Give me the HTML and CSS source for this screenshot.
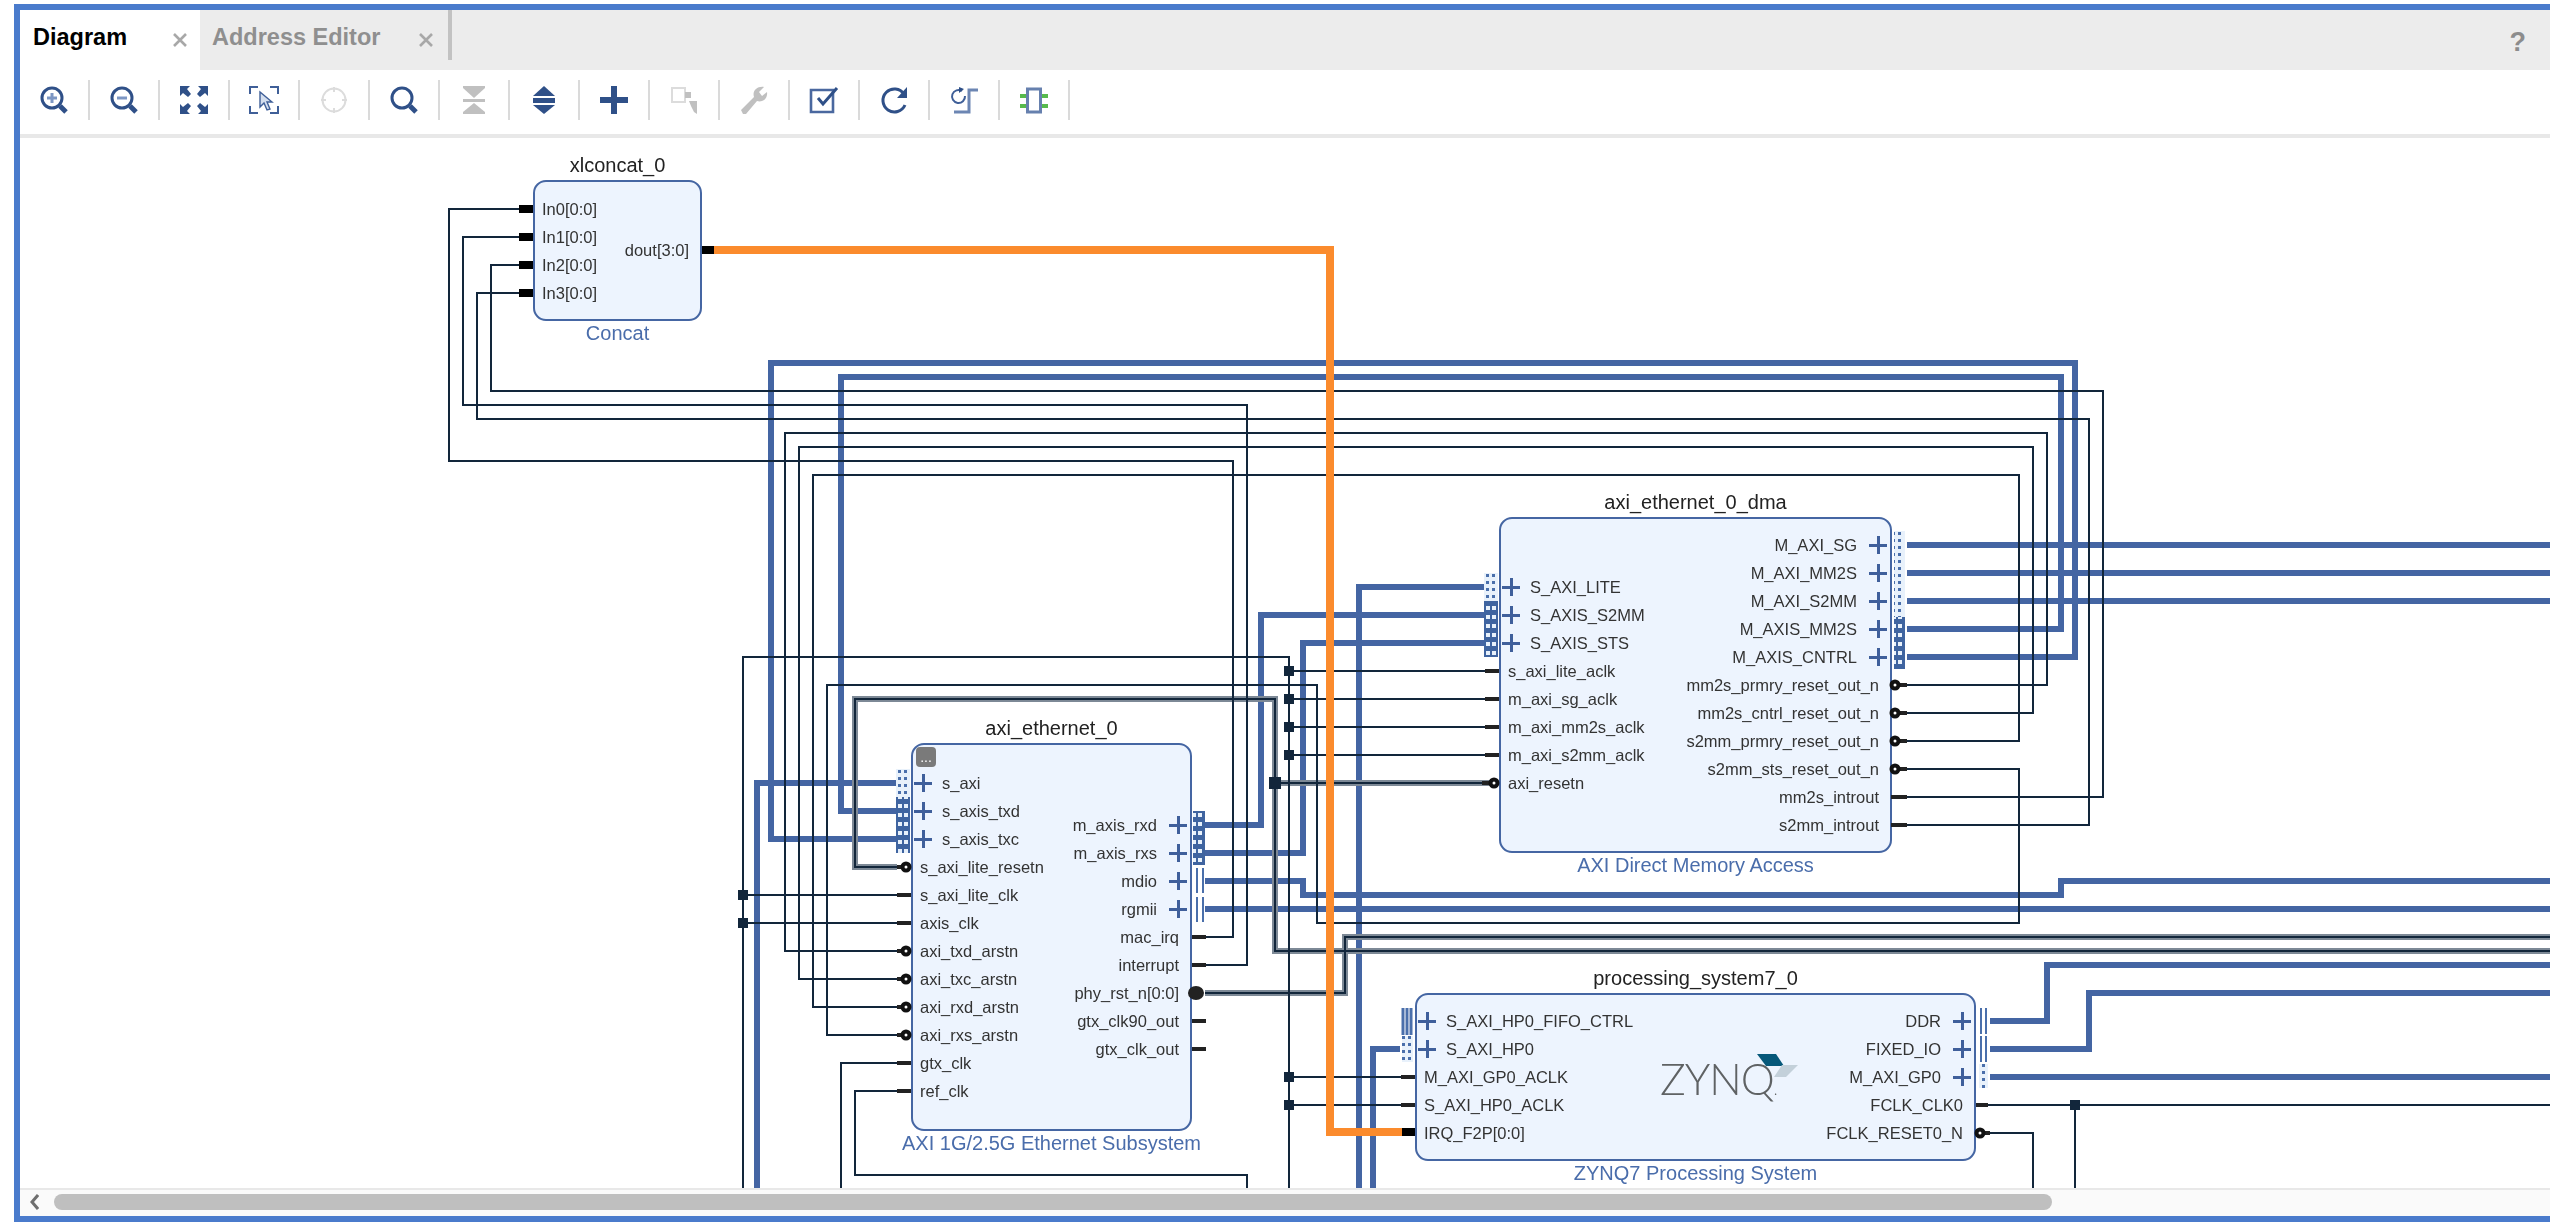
FILE: index.html
```html
<!DOCTYPE html>
<html lang="en">
<head>
<meta charset="utf-8">
<title>Diagram</title>
<link rel="stylesheet" href="styles.css">
</head>
<body>
<div class="frame">
  <div class="tabbar">
    <div class="tab tab-active"><span class="tab-label">Diagram</span>
      <svg class="tab-close" viewBox="0 0 14 14"><path d="M1 1L13 13M13 1L1 13"/></svg></div>
    <div class="tab tab-idle"><span class="tab-label">Address Editor</span>
      <svg class="tab-close" viewBox="0 0 14 14"><path d="M1 1L13 13M13 1L1 13"/></svg></div>
    <div class="help">?</div>
  </div>

  <div class="toolbar">
    <div class="tool"><svg viewBox="0 0 28 28"><circle class="s-dark" cx="12" cy="12" r="10"/><path class="s-light" d="M12 7V17M7 12H17"/><path class="s-handle" d="M20 20L26 26"/></svg></div>
    <div class="tool"><svg viewBox="0 0 28 28"><circle class="s-dark" cx="12" cy="12" r="10"/><path class="s-light" d="M7 12H17"/><path class="s-handle" d="M20 20L26 26"/></svg></div>
    <div class="tool"><svg viewBox="0 0 28 28"><g class="f-dark"><path d="M0 0H10L7 3L11 8L8 11L3 7L0 10Z"/><path d="M28 0V10L25 7L20 11L17 8L21 3L18 0Z"/><path d="M0 28V18L3 21L8 17L11 20L7 25L10 28Z"/><path d="M28 28H18L21 25L17 20L20 17L25 21L28 18Z"/></g></svg></div>
    <div class="tool"><svg viewBox="0 0 28 28"><path class="s-thin" d="M0 8V1H8M20 1H28V8M0 20V27H8M20 27H28V20"/><path class="cursor" d="M10 6V21L14 17L17 24L20 23L17 16L22 16Z"/></svg></div>
    <div class="tool"><svg viewBox="0 0 28 28"><circle class="s-pale" cx="14" cy="14" r="11.5"/><path class="s-pale" d="M14 1V6M14 22V27M1 14H6M22 14H27"/></svg></div>
    <div class="tool"><svg viewBox="0 0 28 28"><circle class="s-dark" cx="12" cy="12" r="10"/><path class="s-handle" d="M20 20L26 26"/></svg></div>
    <div class="tool"><svg viewBox="0 0 28 28"><g class="f-gray"><path d="M3 0H25V2L14 12L3 2Z"/><rect x="3" y="13" width="22" height="3"/><path d="M3 28H25V26L14 17L3 26Z"/></g></svg></div>
    <div class="tool"><svg viewBox="0 0 28 28"><g class="f-dark"><path d="M14 0L25 10H3Z"/><rect x="3" y="12" width="22" height="5"/><path d="M3 19H25L14 28Z"/></g></svg></div>
    <div class="tool"><svg viewBox="0 0 28 28"><path class="f-dark" d="M11 0H17V11H28V17H17V28H11V17H0V11H11Z"/></svg></div>
    <div class="tool"><svg viewBox="0 0 28 28"><rect class="s-pale" x="2" y="2" width="13" height="14"/><g class="f-gray"><rect x="15" y="6" width="6" height="6"/><path d="M19 15H27V28L24 26L21 20Z"/></g></svg></div>
    <div class="tool"><svg viewBox="0 0 28 28"><path class="f-gray" d="M1 24L14 11C12 5 17 0 24 1L19 6L22 10L27 6C28 12 23 17 17 15L6 28H3Z"/></svg></div>
    <div class="tool"><svg viewBox="0 0 28 28"><path class="s-box" d="M1 4H23V26H1Z"/><path class="s-check" d="M8 12L13 18L27 2"/></svg></div>
    <div class="tool"><svg viewBox="0 0 28 28"><path class="s-dark" d="M24 8A11.5 11.5 0 1 0 25 19"/><path class="f-dark" d="M27 1V12H17Z"/></svg></div>
    <div class="tool"><svg viewBox="0 0 28 28"><path class="s-soft" d="M28 4H19V26H4"/><path class="s-thin" d="M12 5A6.5 6.5 0 1 0 15 10"/><path class="f-dark" d="M9 1L14 3L9 7Z"/></svg></div>
    <div class="tool"><svg viewBox="0 0 28 28"><g class="f-green"><rect x="0" y="8" width="28" height="4"/><rect x="0" y="18" width="28" height="4"/></g><rect class="s-chip" x="7.5" y="3" width="13" height="23"/></svg></div>
  </div>

  <div class="canvas">
    <svg class="layer" viewBox="20 138 2530 1050">
      <defs>
        <path id="wire-reset-a" d="M897 867H855V699H1275V951H2550"/>
        <path id="wire-reset-b" d="M1275 783H1490"/>
        <path id="wire-reset-c" d="M1205 993H1345V937H2550"/>
      </defs>
      <g class="wire-bus">
        <path d="M896 783H757V1188"/>
        <path d="M896 811H841V377H2061V629H1907"/>
        <path d="M896 839H771V363H2075V657H1907"/>
        <path d="M1205 825H1261V615H1485"/>
        <path d="M1205 853H1303V643H1485"/>
        <path d="M1205 881H1303V895H2061V881H2550"/>
        <path d="M1205 909H2550"/>
        <path d="M1485 587H1359V1188"/>
        <path d="M1400 1049H1373V1188"/>
        <path d="M1907 545H2550M1907 573H2550M1907 601H2550"/>
        <path d="M1990 1021H2047V965H2550"/>
        <path d="M1990 1049H2089V993H2550"/>
        <path d="M1990 1077H2550"/>
      </g>
      <g class="wire-halo">
        <use href="#wire-reset-a"/><use href="#wire-reset-b"/><use href="#wire-reset-c"/>
      </g>
      <g class="wire-core">
        <use href="#wire-reset-a"/><use href="#wire-reset-b"/><use href="#wire-reset-c"/>
      </g>
      <g class="wire">
        <path d="M519 209H449V461H1233V937H1206"/>
        <path d="M519 237H463V405H1247V965H1206"/>
        <path d="M519 265H491V391H2103V797H1905"/>
        <path d="M519 293H477V419H2089V825H1905"/>
        <path d="M898 951H785V433H2047V685H1905"/>
        <path d="M898 979H799V447H2033V713H1905"/>
        <path d="M898 1007H813V475H2019V741H1905"/>
        <path d="M898 1035H827V685H1317V923H2019V769H1905"/>
        <path d="M1289 1188V657H743V1188"/>
        <path d="M743 895H898M743 923H898"/>
        <path d="M1289 671H1485M1289 699H1485M1289 727H1485M1289 755H1485"/>
        <path d="M1289 1077H1402M1289 1105H1402"/>
        <path d="M898 1063H841V1188"/>
        <path d="M898 1091H855V1175H1247V1188"/>
        <path d="M1987 1105H2550M2075 1105V1188"/>
        <path d="M1987 1133H2033V1188"/>
      </g>
      <g class="junction">
        <rect x="738" y="890" width="10" height="10"/><rect x="738" y="918" width="10" height="10"/>
        <rect x="1284" y="666" width="10" height="10"/><rect x="1284" y="694" width="10" height="10"/>
        <rect x="1284" y="722" width="10" height="10"/><rect x="1284" y="750" width="10" height="10"/>
        <rect x="1284" y="1072" width="10" height="10"/><rect x="1284" y="1100" width="10" height="10"/>
        <rect x="2070" y="1100" width="10" height="10"/>
        <rect x="1269" y="777" width="12" height="12"/>
      </g>
      <path class="wire-data" d="M714 250H1330V1132H1402"/>
    </svg>

    <div class="node n-concat">
      <div class="title">xlconcat_0</div>
      <div class="body">
        <div class="ports left">
          <div class="port">In0[0:0]</div><div class="port">In1[0:0]</div><div class="port">In2[0:0]</div><div class="port">In3[0:0]</div>
        </div>
        <div class="ports right">
          <div class="port">dout[3:0]</div>
        </div>
      </div>
      <div class="subtitle">Concat</div>
    </div>

    <div class="node n-eth">
      <div class="title">axi_ethernet_0</div>
      <div class="body">
        <div class="badge">...</div>
        <div class="ports left">
          <div class="port bus">s_axi</div><div class="port bus">s_axis_txd</div><div class="port bus">s_axis_txc</div>
          <div class="port">s_axi_lite_resetn</div><div class="port">s_axi_lite_clk</div><div class="port">axis_clk</div>
          <div class="port">axi_txd_arstn</div><div class="port">axi_txc_arstn</div><div class="port">axi_rxd_arstn</div><div class="port">axi_rxs_arstn</div>
          <div class="port">gtx_clk</div><div class="port">ref_clk</div>
        </div>
        <div class="ports right">
          <div class="port bus">m_axis_rxd</div><div class="port bus">m_axis_rxs</div><div class="port bus">mdio</div><div class="port bus">rgmii</div>
          <div class="port">mac_irq</div><div class="port">interrupt</div><div class="port">phy_rst_n[0:0]</div><div class="port">gtx_clk90_out</div><div class="port">gtx_clk_out</div>
        </div>
      </div>
      <div class="subtitle">AXI 1G/2.5G Ethernet Subsystem</div>
    </div>

    <div class="node n-dma">
      <div class="title">axi_ethernet_0_dma</div>
      <div class="body">
        <div class="ports left">
          <div class="port bus">S_AXI_LITE</div><div class="port bus">S_AXIS_S2MM</div><div class="port bus">S_AXIS_STS</div>
          <div class="port">s_axi_lite_aclk</div><div class="port">m_axi_sg_aclk</div><div class="port">m_axi_mm2s_aclk</div><div class="port">m_axi_s2mm_aclk</div><div class="port">axi_resetn</div>
        </div>
        <div class="ports right">
          <div class="port bus">M_AXI_SG</div><div class="port bus">M_AXI_MM2S</div><div class="port bus">M_AXI_S2MM</div><div class="port bus">M_AXIS_MM2S</div><div class="port bus">M_AXIS_CNTRL</div>
          <div class="port">mm2s_prmry_reset_out_n</div><div class="port">mm2s_cntrl_reset_out_n</div><div class="port">s2mm_prmry_reset_out_n</div><div class="port">s2mm_sts_reset_out_n</div><div class="port">mm2s_introut</div><div class="port">s2mm_introut</div>
        </div>
      </div>
      <div class="subtitle">AXI Direct Memory Access</div>
    </div>

    <div class="node n-zynq">
      <div class="title">processing_system7_0</div>
      <div class="body">
        <div class="logo">ZYNQ<span class="logo-dot">.</span></div>
        <div class="ports left">
          <div class="port bus">S_AXI_HP0_FIFO_CTRL</div><div class="port bus">S_AXI_HP0</div>
          <div class="port">M_AXI_GP0_ACLK</div><div class="port">S_AXI_HP0_ACLK</div><div class="port">IRQ_F2P[0:0]</div>
        </div>
        <div class="ports right">
          <div class="port bus">DDR</div><div class="port bus">FIXED_IO</div><div class="port bus">M_AXI_GP0</div>
          <div class="port">FCLK_CLK0</div><div class="port">FCLK_RESET0_N</div>
        </div>
      </div>
      <div class="subtitle">ZYNQ7 Processing System</div>
    </div>

    <svg class="layer" viewBox="20 138 2530 1050">
      <defs>
        <pattern id="pat-dots" width="14" height="7" patternUnits="userSpaceOnUse">
          <rect width="14" height="7" fill="#e8f1fb"/>
          <rect x="2" y="0" width="3" height="3" fill="#4a6fab"/>
          <rect x="8" y="0" width="3" height="3" fill="#4a6fab"/>
        </pattern>
        <pattern id="pat-stream" width="14" height="9" patternUnits="userSpaceOnUse">
          <rect width="14" height="9" fill="#3f64a0"/>
          <rect x="2" y="3" width="4" height="4" fill="#e8f1fb"/>
          <rect x="8" y="3" width="4" height="4" fill="#e8f1fb"/>
        </pattern>
      </defs>
      <rect class="c-dots" x="896" y="769" width="14" height="28"/>
      <rect class="c-stream" x="896" y="797" width="14" height="56"/>
      <rect class="c-stream" x="1193" y="811" width="12" height="54"/>
      <path class="c-lines" d="M1197 868V893M1203 868V893M1197 897V922M1203 897V922"/>
      <rect class="c-dots" x="1484" y="573" width="14" height="28"/>
      <rect class="c-stream" x="1484" y="601" width="14" height="56"/>
      <rect class="c-dots" x="1894" y="531" width="11" height="86"/>
      <rect class="c-stream" x="1894" y="617" width="11" height="52"/>
      <path class="c-lines-wide" d="M1403 1008V1035M1407 1008V1035M1411 1008V1035"/>
      <rect class="c-dots" x="1402" y="1036" width="11" height="26"/>
      <path class="c-lines" d="M1981 1008V1034M1986 1008V1034M1981 1036V1062M1986 1036V1062"/>
      <rect class="c-dots" x="1979" y="1064" width="9" height="24"/>

      <g class="bar">
        <rect x="897" y="893" width="14" height="4"/><rect x="897" y="921" width="14" height="4"/>
        <rect x="897" y="1061" width="14" height="4"/><rect x="897" y="1089" width="14" height="4"/>
        <rect x="1192" y="935" width="14" height="4"/><rect x="1192" y="963" width="14" height="4"/>
        <rect x="1192" y="1019" width="14" height="4"/><rect x="1192" y="1047" width="14" height="4"/>
        <rect x="1485" y="669" width="14" height="4"/><rect x="1485" y="697" width="14" height="4"/>
        <rect x="1485" y="725" width="14" height="4"/><rect x="1485" y="753" width="14" height="4"/>
        <rect x="1891" y="795" width="16" height="4"/><rect x="1891" y="823" width="16" height="4"/>
        <rect x="1401" y="1075" width="14" height="4"/><rect x="1401" y="1103" width="14" height="4"/>
        <rect x="1976" y="1103" width="12" height="4"/>
        <rect x="897" y="865" width="10" height="4"/>
        <rect x="897" y="949" width="10" height="4"/><rect x="897" y="977" width="10" height="4"/>
        <rect x="897" y="1005" width="10" height="4"/><rect x="897" y="1033" width="10" height="4"/>
        <rect x="1482" y="781" width="10" height="4"/>
        <rect x="1898" y="683" width="9" height="4"/><rect x="1898" y="711" width="9" height="4"/>
        <rect x="1898" y="739" width="9" height="4"/><rect x="1898" y="767" width="9" height="4"/>
        <rect x="1983" y="1131" width="7" height="4"/>
      </g>
      <g class="bubble">
        <circle cx="906" cy="867" r="3.5"/><circle cx="906" cy="951" r="3.5"/><circle cx="906" cy="979" r="3.5"/>
        <circle cx="906" cy="1007" r="3.5"/><circle cx="906" cy="1035" r="3.5"/>
        <circle cx="1494" cy="783" r="3.5"/>
        <circle cx="1895" cy="685" r="3.5"/><circle cx="1895" cy="713" r="3.5"/><circle cx="1895" cy="741" r="3.5"/><circle cx="1895" cy="769" r="3.5"/>
        <circle cx="1980" cy="1133" r="3.5"/>
      </g>
      <ellipse class="bar" cx="1196" cy="993" rx="8" ry="7"/>
      <g class="bar-solid">
        <rect x="519" y="205" width="14" height="8"/><rect x="519" y="233" width="14" height="8"/>
        <rect x="519" y="261" width="14" height="8"/><rect x="519" y="289" width="14" height="8"/>
        <rect x="702" y="246" width="12" height="8"/>
        <rect x="1402" y="1128" width="13" height="8"/>
      </g>
      <polygon class="logo-dark" points="1757,1054 1776,1054 1784,1066 1766,1066"/>
      <polygon class="logo-light" points="1782,1065 1798,1065 1786,1077 1774,1077"/>
    </svg>
  </div>

  <div class="hscroll">
    <svg class="chevron" viewBox="0 0 9 16"><path d="M8 1L2 8L8 15"/></svg>
    <div class="thumb"></div>
  </div>
</div>
</body>
</html>
```

FILE: styles.css
```css
* { box-sizing: border-box; }
html, body { margin: 0; height: 100%; background: #fff; overflow: hidden; }
body { font-family: "Liberation Sans", Arial, sans-serif; }

.frame {
  margin: 4px 0 0 14px;
  height: 1218px;
  border: solid #4a7bcc;
  border-width: 6px 0 6px 6px;
  display: flex;
  flex-direction: column;
}

/* tabs */
.tabbar { height: 60px; flex: none; background: #ececec; display: flex; align-items: flex-start; }
.tab { display: flex; align-items: center; justify-content: space-between; font-size: 23.5px; }
.tab-active { width: 180px; height: 60px; background: #fff; padding: 0 13px; color: #000; font-weight: 700; }
.tab-idle { width: 252px; height: 50px; padding: 10px 15px 0 12px; border-right: 4px solid #c2c2c2; color: #8f8f8f; font-weight: 700; }
.tab-label { padding-bottom: 5px; }
.tab-close { width: 14px; height: 14px; flex: none; }
.tab-close path { fill: none; stroke: #a8a8a8; stroke-width: 2.6; }
.help { margin-left: auto; margin-right: 24px; margin-top: 17px; font-size: 27px; line-height: 30px; font-weight: 700; color: #8c8c8c; }

/* toolbar */
.toolbar { height: 68px; flex: none; display: flex; align-items: center; padding-bottom: 4px; border-bottom: 4px solid #e8e8e8; }
.tool { width: 70px; height: 40px; border-right: 2px solid #dadada; display: flex; align-items: center; justify-content: center; flex: none; }
.tool svg { width: 28px; height: 28px; overflow: visible; }
.s-dark { fill: none; stroke: #2f5088; stroke-width: 3; }
.s-light { fill: none; stroke: #7d97c4; stroke-width: 3; }
.s-handle { fill: none; stroke: #2f5088; stroke-width: 5; }
.s-thin { fill: none; stroke: #3f5f98; stroke-width: 2; }
.s-pale { fill: none; stroke: #dcdcdc; stroke-width: 2; }
.s-box { fill: none; stroke: #4a689f; stroke-width: 2.6; }
.s-check { fill: none; stroke: #2f5088; stroke-width: 3; }
.s-soft { fill: none; stroke: #6c86b3; stroke-width: 3; }
.s-chip { fill: #fff; stroke: #6680ae; stroke-width: 3; }
.f-dark { fill: #2f5088; }
.f-gray { fill: #c0c0c0; }
.f-green { fill: #57ba4c; }
.cursor { fill: #d4deee; stroke: #3f5f98; stroke-width: 1.4; }

/* canvas */
.canvas { position: relative; flex: 1; overflow: hidden; background: #fff; }
.layer { position: absolute; left: 0; top: 0; width: 2530px; height: 1050px; pointer-events: none; }
.wire, .wire-bus, .wire-halo, .wire-core, .wire-data { fill: none; }
.wire { stroke: #12263b; stroke-width: 2; }
.wire-bus { stroke: #4465a3; stroke-width: 6; }
.wire-halo { stroke: #7d8996; stroke-width: 6; }
.wire-core { stroke: #12263b; stroke-width: 2; }
.wire-data { stroke: #fb8b2d; stroke-width: 8; }
.junction { fill: #12263b; }

/* nodes */
.node { position: absolute; display: flex; flex-direction: column; align-items: center; filter: blur(.3px); }
.n-concat { left: 513px; top: 15px; width: 169px; }
.n-eth { left: 891px; top: 578px; width: 281px; }
.n-dma { left: 1479px; top: 352px; width: 393px; }
.n-zynq { left: 1395px; top: 828px; width: 561px; }
.title { height: 24px; margin-bottom: 3px; font-size: 20px; line-height: 24px; color: #222; white-space: nowrap; }
.subtitle { height: 24px; font-size: 20px; line-height: 24px; color: #4a6dab; white-space: nowrap; }
.body {
  position: relative;
  width: 100%;
  display: flex;
  justify-content: space-between;
  background: #edf4fe;
  border: 2px solid #4566a3;
  border-radius: 13px;
}
.n-concat .body { height: 141px; }
.n-eth .body { height: 388px; }
.n-dma .body { height: 336px; }
.n-zynq .body { height: 168px; }
.ports { display: flex; flex-direction: column; }
.ports.right { align-items: flex-end; }
.port { height: 28px; display: flex; align-items: center; font-size: 16.5px; color: #333; white-space: nowrap; }
.ports.left .port { padding-left: 7px; }
.ports.right .port { padding-right: 11px; }
.ports.left .bus { padding-left: 1px; gap: 10px; }
.ports.right .bus { padding-right: 3px; gap: 12px; }
.bus::before, .bus::after {
  width: 18px;
  height: 18px;
  flex: none;
  background:
    linear-gradient(#3f5f9b, #3f5f9b) center / 3px 100% no-repeat,
    linear-gradient(#3f5f9b, #3f5f9b) center / 100% 3px no-repeat;
}
.ports.left .bus::before { content: ""; }
.ports.right .bus::after { content: ""; }

.n-concat .ports.left { padding-top: 13px; }
.n-concat .ports.right { padding-top: 54px; }
.n-eth .ports.left { padding-top: 24px; }
.n-eth .ports.right { padding-top: 66px; }
.n-dma .ports.left { padding-top: 54px; }
.n-dma .ports.right { padding-top: 12px; }
.n-zynq .ports { padding-top: 12px; }

.badge {
  position: absolute;
  left: 3px;
  top: 2px;
  width: 20px;
  height: 20px;
  border-radius: 4px;
  background: #7a7a7a;
  color: #fff;
  font-size: 14px;
  line-height: 20px;
  text-align: center;
}
.logo {
  position: absolute;
  left: 243px;
  top: 61px;
  font-family: Lato, "Liberation Sans", sans-serif;
  font-weight: 300;
  font-size: 43px;
  line-height: 46px;
  letter-spacing: -1px;
  color: #5f6264;
}
.logo-dot { font-size: 16px; }
.logo-dark { fill: #06587a; }
.logo-light { fill: #c3d0da; }

/* port connectors */
.c-dots { fill: url(#pat-dots); }
.c-stream { fill: url(#pat-stream); }
.c-lines { fill: none; stroke: #4a6fab; stroke-width: 2; }
.c-lines-wide { fill: none; stroke: #4a6fab; stroke-width: 3; }
.bar { fill: #222; }
.bar-solid { fill: #000; }
.bubble { fill: #fff; stroke: #111; stroke-width: 4; }

/* scrollbar */
.hscroll {
  height: 28px;
  flex: none;
  display: flex;
  align-items: center;
  padding: 0 0 2px 10px;
  background: #fafafa;
  border-top: 2px solid #e8e8e8;
}
.chevron { width: 9px; height: 16px; flex: none; }
.chevron path { fill: none; stroke: #6f6f6f; stroke-width: 3; }
.thumb { width: 1998px; height: 16px; margin-left: 15px; background: #bfbfbf; border-radius: 8px; }
```
